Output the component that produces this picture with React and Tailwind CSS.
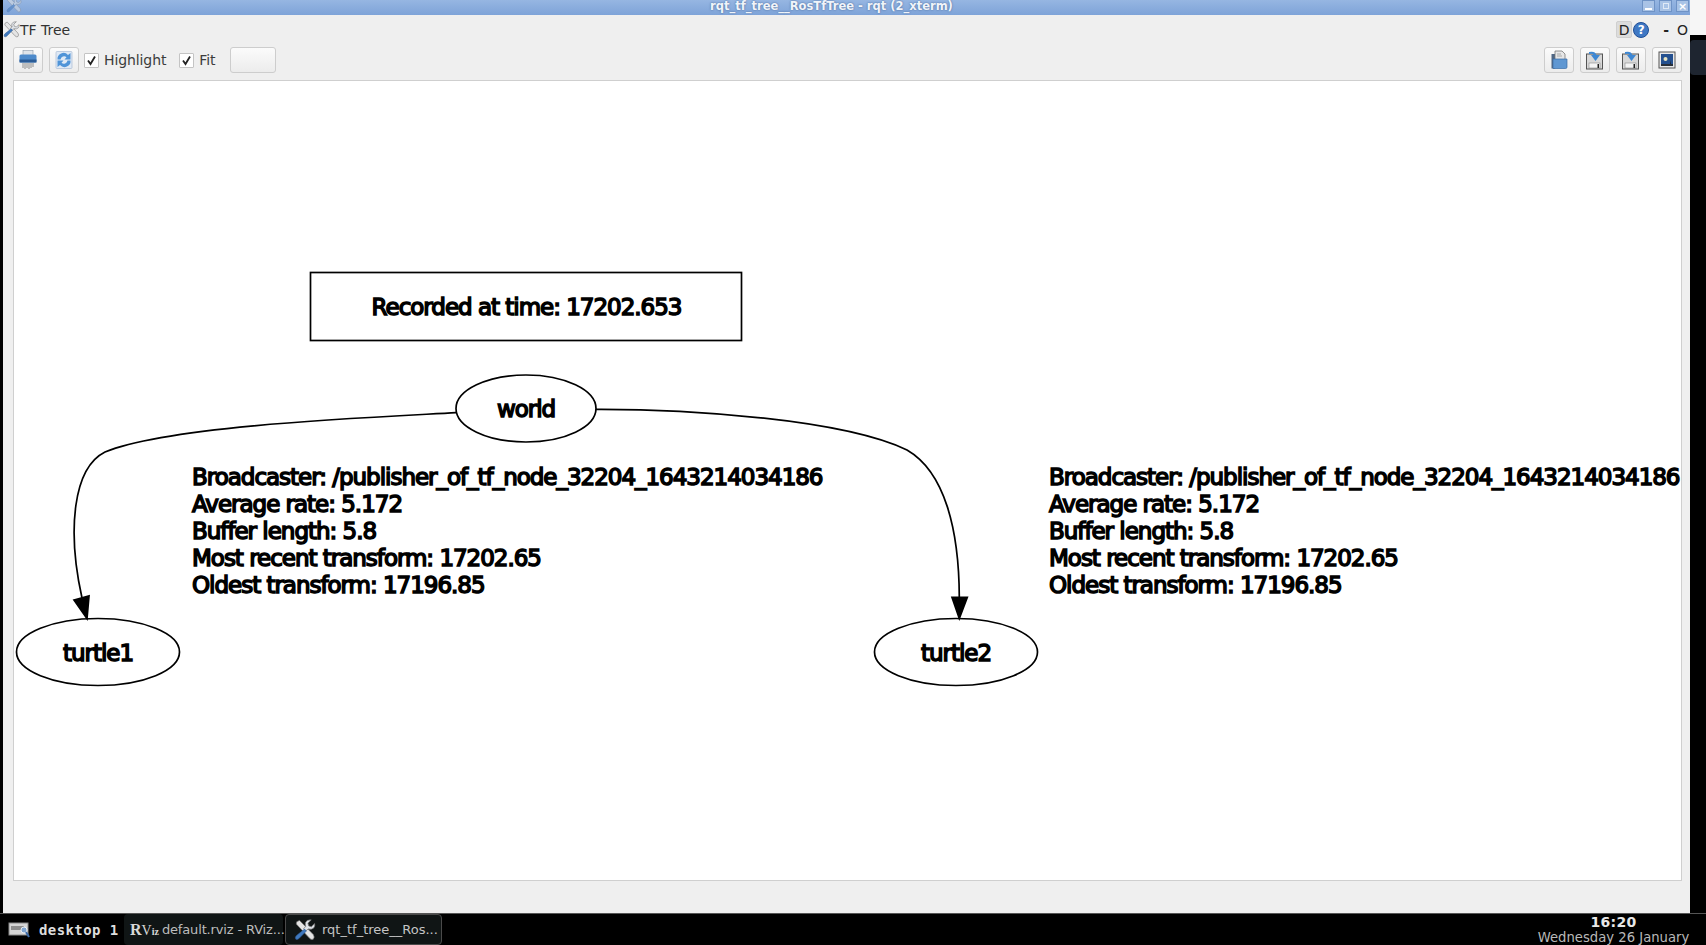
import React from "react";

const FONT = "font-['DejaVu_Sans',sans-serif]";

function ToolButton({ children, className = "w-[30px]" }) {
  return (
    <div className={`${className} h-[26px] flex items-center justify-center rounded-[3px] border border-[#cdcdcd] bg-gradient-to-b from-[#fbfbfb] to-[#ececec] shrink-0`}>
      {children}
    </div>
  );
}

function Check({ label, className }) {
  return (
    <div className={`flex items-center gap-[5px] ${className}`}>
      <div className="w-[15px] h-[15px] border border-[#c4c4c4] bg-white rounded-[1px] flex items-center justify-center">
        <svg width="11" height="11" viewBox="0 0 11 11">
          <path d="M2 5.5 L4.5 9 L9 1.5" fill="none" stroke="#222" strokeWidth="1.8" />
        </svg>
      </div>
      <span className="text-[14px] text-[#3c3c3c] leading-none tracking-[-0.1px]">{label}</span>
    </div>
  );
}

// wrench and screwdriver of the rqt window icon
function Tools({ size = 16 }) {
  return (
    <svg width={size} height={size} viewBox="0 0 24 24">
      <path d="M3 3 L6 1.5 L21 17 Q23 20 21 22 Q18.5 23 17 21 L2.5 5.5 Z" fill="#e4e4e4" stroke="#777" strokeWidth="0.8" />
      <path d="M22.5 5 L19 8.5 L16 7.5 L15.2 4.5 L18.8 1 Q14 0.5 12.5 4 Q12 6 12.8 8 L10.5 10.5 L13 13 L15.5 10.8 Q19 12 21.5 9.8 Q23.2 8 22.5 5 Z" fill="#dfe3e8" stroke="#777" strokeWidth="0.8" />
      <path d="M11.5 11 L13.5 13.2 L6 20.8 Q4 23.2 2 22 Q0.5 20 3 17.8 Z" fill="#3f78bd" stroke="#2a578f" strokeWidth="0.6" />
    </svg>
  );
}

function Shredder() {
  return (
    <svg width="18" height="20" viewBox="0 0 18 20">
      <rect x="4" y="0.5" width="10" height="5" fill="#dfe4ea" stroke="#8b98a8" strokeWidth="0.6" />
      <rect x="0.5" y="4.5" width="17" height="8" rx="1.5" fill="#4d8acb" />
      <rect x="0.5" y="9.5" width="17" height="3" fill="#2b5c97" />
      <path d="M4 13v5M6 13v6M8 13v5M10 13v6M12 13v5M14 13v4" stroke="#8c8c8c" strokeWidth="1" />
    </svg>
  );
}

function Refresh() {
  return (
    <svg width="18" height="20" viewBox="0 0 18 20" fill="none">
      <rect x="1" y="1.5" width="16" height="17" rx="1" fill="#dfe9f5" stroke="#a9bcd6" strokeWidth="0.7" />
      <path d="M2.5 9.5 A6 6 0 0 1 13 5 L15.5 3 V9.5 H9.5 L11.5 7.2 A3.6 3.6 0 0 0 5.5 9.5 Z" fill="#4f94d8" />
      <path d="M15.5 10.5 A6 6 0 0 1 5 15 L2.5 17 V10.5 H8.5 L6.5 12.8 A3.6 3.6 0 0 0 12.5 10.5 Z" fill="#4f94d8" />
    </svg>
  );
}

function OpenFile() {
  return (
    <svg width="18" height="20" viewBox="0 0 18 20">
      <path d="M1.5 4 H5 V18.5 H1.5 Z" fill="#4f6683" />
      <path d="M5 1 H12 L15 4 V10 H5 Z" fill="#e6e6e6" stroke="#777" strokeWidth="0.8" />
      <path d="M7 4 H11 M7 6 H12" stroke="#999" strokeWidth="0.8" />
      <path d="M3 9 H17 V17 Q17 18.5 15.5 18.5 H3 Z" fill="#5f97d2" stroke="#3a6ba5" strokeWidth="0.7" />
    </svg>
  );
}

function SaveArrow() {
  return (
    <svg width="20" height="20" viewBox="0 0 20 20">
      <rect x="1.5" y="4" width="16" height="15" fill="#d8d8d8" stroke="#555" strokeWidth="1" />
      <rect x="4" y="13" width="11" height="5" fill="#f4f4f4" stroke="#777" strokeWidth="0.5" />
      <rect x="12.5" y="14" width="1.5" height="4" fill="#222" />
      <path d="M4 2 Q10 0.5 11.5 5 H15 L10.5 11 L6 5 H8.5 Q7.5 3 4 4 Z" fill="#3d87d3" />
    </svg>
  );
}

function ImageIcon() {
  return (
    <svg width="18" height="18" viewBox="0 0 18 18">
      <rect x="1" y="1" width="16" height="16" fill="#e9e9e9" stroke="#555" strokeWidth="1" />
      <rect x="3" y="3" width="12" height="12" fill="#24508f" />
      <circle cx="7.5" cy="8" r="2" fill="#e7e3c0" />
      <path d="M3 13 H15 V15 H3 Z" fill="#29303a" />
      <path d="M12 13 V9 L13 13 Z" fill="#1d2430" />
    </svg>
  );
}

function TitleBar() {
  return (
    <div className="relative h-[15px] shrink-0 flex items-center justify-center overflow-hidden bg-gradient-to-b from-[#96b6e2] to-[#7ea3d8]">
      <div className="absolute left-[3px] top-[-3px] opacity-50">
        <Tools size={16} />
      </div>
      <span className="text-[11.5px] leading-[13px] font-bold text-[#f0f4fa] mt-[-2px] ml-[-30px] whitespace-pre [text-shadow:0_0_2px_#3f5f8f]">rqt_tf_tree__RosTfTree - rqt (2_xterm)</span>
      <div className="absolute right-[1px] top-0 flex gap-[4px]">
        <div className="w-[13px] h-[12px] bg-[#a9c3e6] border border-[#6f93c6] flex items-end justify-center pb-[1px]">
          <div className="w-[7px] h-[2px] bg-white" />
        </div>
        <div className="w-[13px] h-[12px] bg-[#a9c3e6] border border-[#6f93c6] flex items-center justify-center">
          <div className="w-[6px] h-[6px] border border-[#dfe9f6]" />
        </div>
        <div className="w-[13px] h-[12px] bg-[#a9c3e6] border border-[#6f93c6] flex items-center justify-center text-white text-[11px] font-bold leading-none">×</div>
      </div>
    </div>
  );
}

function Graph() {
  const info = (
    <>
      <div>Broadcaster: /publisher_of_tf_node_32204_1643214034186</div>
      <div>Average rate: 5.172</div>
      <div>Buffer length: 5.8</div>
      <div>Most recent transform: 17202.65</div>
      <div>Oldest transform: 17196.85</div>
    </>
  );
  const graphText = "absolute text-[23px] text-black leading-[27px] whitespace-pre tracking-[-1.02px] [-webkit-text-stroke:1.5px_black]";
  // canvas origin is 14,81 in page coords
  return (
    <div className="relative flex-1 border border-[#cfcfcf] bg-white overflow-hidden">
      <svg className="absolute left-[-14px] top-[-81px]" width="1706" height="945" fill="none" stroke="#000" strokeWidth="1.7">
        <rect x="310.5" y="272.5" width="431" height="68" />
        <ellipse cx="526" cy="408.5" rx="70" ry="33.5" />
        <ellipse cx="98" cy="652" rx="81.5" ry="33.5" />
        <ellipse cx="956" cy="652" rx="81.5" ry="33.5" />
        <path d="M456 412.7 C 380 417, 170 425, 105 452 C 73 468, 67 530, 82 598" />
        <path d="M596 409.3 C 680 409, 840 418, 907 450 C 945 472, 959 530, 959.3 597" />
        <path d="M74 600 L89 596 L87 618.5 Z" fill="#000" />
        <path d="M952 597.3 L967.3 597.3 L959.3 618.5 Z" fill="#000" />
      </svg>
      <div className={`${graphText} left-[297px] w-[431px] text-center top-[213px]`}>Recorded at time: 17202.653</div>
      <div className={`${graphText} left-[441.5px] w-[141px] text-center top-[315px]`}>world</div>
      <div className={`${graphText} left-[2.5px] w-[163px] text-center top-[559px]`}>turtle1</div>
      <div className={`${graphText} left-[860.5px] w-[163px] text-center top-[559px]`}>turtle2</div>
      <div className={`${graphText} left-[178px] top-[383px]`}>{info}</div>
      <div className={`${graphText} left-[1035px] top-[383px]`}>{info}</div>
    </div>
  );
}

function Taskbar() {
  return (
    <div className="h-[31px] shrink-0 bg-black flex items-stretch relative">
      <div className="flex items-center pl-[8px] w-[124px] shrink-0">
        <svg width="22" height="18" viewBox="0 0 22 18">
          <rect x="1" y="2" width="19" height="12" fill="#d5d5d5" stroke="#8a8a8a" strokeWidth="1" />
          <rect x="3" y="5" width="13" height="4" fill="#8d8d8d" />
          <circle cx="16" cy="9" r="3" fill="#7fa4cf" stroke="#fff" strokeWidth="0.8" />
          <path d="M18 11 L21 16" stroke="#3b6aa8" strokeWidth="2" />
        </svg>
        <span className="ml-[9px] text-[14px] font-bold text-[#dddddd] tracking-[0.4px] font-['DejaVu_Sans_Mono',monospace] leading-none">desktop 1</span>
      </div>
      <div className="w-[159px] shrink-0 rounded-[4px] bg-[#101515] flex items-center pl-[6px]">
        <span className="flex items-baseline font-bold text-[#d8d8d8] font-['Liberation_Serif',serif] leading-none">
          <span className="text-[16px]">R</span>
          <span className="text-[14px] font-normal">V</span>
          <span className="text-[10px]">iz</span>
        </span>
        <span className="ml-[3px] text-[13px] text-[#bdbdbd] leading-none whitespace-pre tracking-[-0.15px]">default.rviz - RViz...</span>
      </div>
      <div className="w-[157px] ml-[2px] shrink-0 rounded-[4px] bg-[#101515] border border-[#4a4a4a] flex items-center pl-[8px]">
        <Tools size={22} />
        <span className="ml-[6px] text-[13px] text-[#c4c4c4] leading-none whitespace-pre">rqt_tf_tree__Ros...</span>
      </div>
      <div className="ml-auto w-[167px] mr-[9px] flex flex-col items-center justify-center">
        <span className="text-[14px] font-bold text-[#e8e8e8] leading-[15px] tracking-[0.3px]">16:20</span>
        <span className="text-[13.2px] text-[#b9b9b9] leading-[15px] whitespace-pre">Wednesday 26 January</span>
      </div>
    </div>
  );
}

export default function App() {
  return (
    <div className={`w-[1706px] h-[945px] overflow-hidden bg-black flex flex-col ${FONT}`}>
      <div className="flex-1 flex min-h-0 border-b border-[#555]">
        <div className="w-[3px] bg-black shrink-0" />
        <div className="flex-1 flex flex-col bg-[#efefef] min-w-0">
          <TitleBar />
          <div className="h-[29px] shrink-0 flex items-center relative">
            <div className="absolute left-[0px] top-[6px]"><Tools size={17} /></div>
            <span className="ml-[17px] text-[14px] text-[#333] leading-none">TF Tree</span>
            <div className="ml-auto flex items-center mr-[2px]">
              <div className="w-[16px] h-[17px] bg-[#dcdcdc] border border-[#cfcfcf] rounded-[2px] flex items-center justify-center text-[14px] text-[#222] leading-none">D</div>
              <div className="w-[16px] h-[16px] ml-[1px] rounded-full bg-[#3f78c4] border border-[#1f4f97] flex items-center justify-center text-white text-[12px] font-bold leading-none">?</div>
              <span className="ml-[14px] text-[14px] font-bold text-[#222] leading-none">-</span>
              <span className="ml-[8px] text-[14px] text-[#222] leading-none">O</span>
            </div>
          </div>
          <div className="h-[26px] mt-[3px] shrink-0 flex items-center pl-[10px] pr-[8px]">
            <ToolButton><Shredder /></ToolButton>
            <div className="w-[6px]" />
            <ToolButton><Refresh /></ToolButton>
            <Check label="Highlight" className="ml-[5px]" />
            <Check label="Fit" className="ml-[13px]" />
            <ToolButton className="w-[46px] ml-[15px]" />
            <div className="ml-auto flex gap-[6px]">
              <ToolButton><OpenFile /></ToolButton>
              <ToolButton><SaveArrow /></ToolButton>
              <ToolButton><SaveArrow /></ToolButton>
              <ToolButton><ImageIcon /></ToolButton>
            </div>
          </div>
          <div className="flex-1 flex flex-col mt-[7px] mb-[32px] ml-[10px] mr-[8px] min-h-0">
            <Graph />
          </div>
        </div>
        <div className="w-[16px] shrink-0 flex flex-col">
          <div className="h-[35px] bg-[#f6f6f6]" />
          <div className="h-[5px] bg-black" />
          <div className="h-[35px] bg-[#1e2530] rounded-l-[4px]" />
        </div>
      </div>
      <Taskbar />
    </div>
  );
}
